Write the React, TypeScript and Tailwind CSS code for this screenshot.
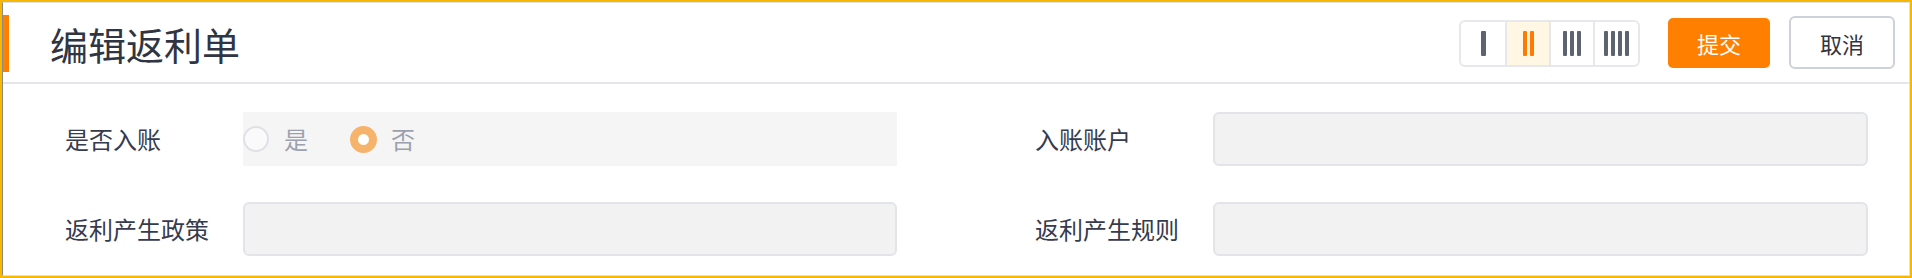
import React from "react";

const font = { fontFamily: '"Noto Sans CJK SC", "Noto Sans", sans-serif' };

function Bars({ n, active }: { n: number; active?: boolean }) {
  const bars = Array.from({ length: n });
  return (
    <div className="flex items-center gap-[3px]">
      {bars.map((_, i) => (
        <span
          key={i}
          className={
            n === 1
              ? "block w-[5px] h-[25px] rounded-[1px] bg-[#5d6470]"
              : active
              ? "block w-[4px] h-[25px] rounded-[1px] bg-[#ff7a00]"
              : "block w-[4px] h-[25px] rounded-[1px] bg-[#5d6470]"
          }
        />
      ))}
    </div>
  );
}

function Field({ label, children }: { label: string; children?: React.ReactNode }) {
  return (
    <div className="flex items-center">
      <div className="w-[178px] text-[24px] leading-none text-[#363b4e]">{label}</div>
      {children ?? (
        <div className="w-[655px] h-[54px] rounded-[6px] border-2 border-[#e2e4e8] bg-[#f2f2f2]" />
      )}
    </div>
  );
}

export default function App() {
  return (
    <div style={font} className="w-[1912px] h-[278px] border-2 border-[#f8b800] bg-white">
      <div className="h-full flex flex-col border border-[#dde0e4] border-l-[#8a8a8a]">
        <div className="h-[81px] shrink-0 flex items-center border-b-2 border-[#e4e6ea] pr-[14px]">
          <div className="w-[6px] h-[57px] bg-[#ff7f00] mt-[2px]" />
          <div className="ml-[41px] text-[38px] leading-none text-[#2f3542] mt-[3px]">编辑返利单</div>
          <div className="ml-auto flex items-center">
            <div className="flex h-[47px] w-[181px] rounded-[6px] border-2 border-[#e6e8ec] overflow-hidden mt-[1px]">
              <div className="w-[46px] flex items-center justify-center border-r-2 border-[#e6e8ec]">
                <Bars n={1} />
              </div>
              <div className="w-[44px] flex items-center justify-center border-r-2 border-[#e6e8ec] bg-[#fff6e3]">
                <Bars n={2} active />
              </div>
              <div className="w-[44px] flex items-center justify-center border-r-2 border-[#e6e8ec]">
                <Bars n={3} />
              </div>
              <div className="flex-1 flex items-center justify-center">
                <Bars n={4} />
              </div>
            </div>
            <button className="ml-[28px] w-[102px] h-[50px] rounded-[5px] bg-[#ff8000] text-white text-[22px] leading-none flex items-center justify-center">
              提交
            </button>
            <button className="ml-[19px] w-[106px] h-[53px] rounded-[6px] border-2 border-[#cdd1d9] bg-white text-[#2f3542] text-[22px] leading-none flex items-center justify-center">
              取消
            </button>
          </div>
        </div>
        <div className="flex-1 pt-[28px] pl-[62px]">
          <div className="flex flex-col gap-[36px]">
            <div className="flex gap-[138px]">
              <Field label="是否入账">
                <div className="w-[654px] h-[54px] bg-[#f5f5f5] flex items-center">
                  <span className="w-[26px] h-[26px] rounded-full border-2 border-[#dfe1e6] bg-[#fafafa]" />
                  <span className="ml-[15px] text-[24px] leading-none text-[#9ca1ae]">是</span>
                  <span className="ml-[42px] w-[27px] h-[27px] rounded-full border-[8px] border-[#f6b36c] bg-white" />
                  <span className="ml-[14px] text-[24px] leading-none text-[#9ca1ae]">否</span>
                </div>
              </Field>
              <Field label="入账账户" />
            </div>
            <div className="flex gap-[138px]">
              <Field label="返利产生政策">
                <div className="w-[654px] h-[54px] rounded-[6px] border-2 border-[#e2e4e8] bg-[#f2f2f2]" />
              </Field>
              <Field label="返利产生规则" />
            </div>
          </div>
        </div>
      </div>
    </div>
  );
}
